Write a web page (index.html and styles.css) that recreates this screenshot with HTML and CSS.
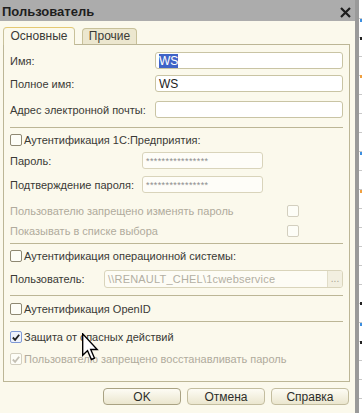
FILE: index.html
```html
<!DOCTYPE html>
<html lang="ru">
<head>
    <meta charset="UTF-8">
    <meta name="viewport" content="width=device-width, initial-scale=1.0">
    <title>Пользователь</title>
    <link rel="stylesheet" href="styles.css">
</head>
<body>
<div class="screen">
    <div class="window">
        <div class="titlebar">
            <span class="title">Пользователь</span>
            <svg class="close" width="11" height="11" viewBox="0 0 11 11">
                <path d="M1 1 L10 10 M10 1 L1 10" stroke="#1e1e1e" stroke-width="2.2"/>
            </svg>
        </div>

        <div class="body">
            <div class="tabs">
                <div class="tab active">Основные</div>
                <div class="tab">Прочие</div>
            </div>

            <div class="panel">
                <div class="field">
                    <label class="label w-main">Имя:</label>
                    <div class="input"><span class="selected">WS</span></div>
                </div>
                <div class="field mt-6">
                    <label class="label w-main">Полное имя:</label>
                    <div class="input">WS</div>
                </div>
                <div class="field mt-9">
                    <label class="label w-main">Адрес электронной почты:</label>
                    <div class="input"></div>
                </div>

                <div class="sep mt-9"></div>

                <div class="check mt-6">
                    <span class="box"></span>
                    <span>Аутентификация 1С:Предприятия:</span>
                </div>
                <div class="field mt-6">
                    <label class="label w-pass">Пароль:</label>
                    <div class="input pass">****************</div>
                </div>
                <div class="field mt-7">
                    <label class="label w-pass">Подтверждение пароля:</label>
                    <div class="input pass">****************</div>
                </div>
                <div class="check disabled mt-12">
                    <span class="grow">Пользователю запрещено изменять пароль</span>
                    <span class="box right"></span>
                </div>
                <div class="check disabled mt-8">
                    <span class="grow">Показывать в списке выбора</span>
                    <span class="box right"></span>
                </div>

                <div class="sep mt-6"></div>

                <div class="check mt-6">
                    <span class="box"></span>
                    <span>Аутентификация операционной системы:</span>
                </div>
                <div class="field user mt-8">
                    <label class="label w-user">Пользователь:</label>
                    <div class="input dim">
                        <span class="grow">\\RENAULT_CHEL\1cwebservice</span>
                        <span class="dots">...</span>
                    </div>
                </div>

                <div class="sep mt-7"></div>

                <div class="check mt-7">
                    <span class="box"></span>
                    <span>Аутентификация OpenID</span>
                </div>

                <div class="sep mt-6"></div>

                <div class="check mt-9">
                    <span class="box checked">
                        <svg width="11" height="11" viewBox="0 0 11 11"><path d="M2 5.5 L4.5 8 L9 2.5" fill="none" stroke="#222" stroke-width="2"/></svg>
                    </span>
                    <span>Защита от опасных действий</span>
                </div>
                <div class="check disabled mt-10">
                    <span class="box">
                        <svg width="11" height="11" viewBox="0 0 11 11"><path d="M2 5.5 L4.5 8 L9 2.5" fill="none" stroke="#c4c0b4" stroke-width="2"/></svg>
                    </span>
                    <span>Пользователю запрещено восстанавливать пароль</span>
                </div>
            </div>

            <div class="buttons">
                <button class="button default">OK</button>
                <button class="button">Отмена</button>
                <button class="button">Справка</button>
            </div>
        </div>

        <svg class="cursor" width="18" height="28" viewBox="0 0 13 20">
            <path d="M0.5 0.5 L0.5 16 L4 12.6 L6.8 19 L9 18 L6.3 11.8 L11 11.8 Z" fill="#fff" stroke="#000" stroke-width="1"/>
        </svg>
    </div>

    <div class="edge">
        <span class="mark blue" style="top: 19px"></span>
        <span class="mark black" style="top: 37px"></span>
        <span class="mark orange" style="top: 75px"></span>
        <span class="mark blue" style="top: 152px"></span>
        <span class="mark orange" style="top: 190px"></span>
        <span class="mark black" style="top: 302px"></span>
        <span class="mark blue" style="top: 323px"></span>
        <span class="mark black" style="top: 341px"></span>
    </div>
</div>
</body>
</html>
```

FILE: styles.css
```css
* {
    margin: 0;
    padding: 0;
    box-sizing: border-box;
}
body {
    font-family: "Liberation Sans", Arial, sans-serif;
    font-size: 11px;
    color: #3a3a36;
    background-color: #ffffff;
}

.screen {
    display: flex;
    height: 413px;
    overflow: hidden;
}

.window {
    position: relative;
    flex: none;
    width: 355px;
    background-color: #fbf9ec;
}

.titlebar {
    height: 21px;
    background-color: #acacac;
    display: flex;
    align-items: center;
    justify-content: space-between;
    padding: 1px 4px 0 2px;
}
.title {
    font-size: 13px;
    font-weight: bold;
    color: #1e1e1e;
}
.close {
    margin-top: 2px;
}

.body {
    padding: 6px 5px 0 3px;
}

.tabs {
    display: flex;
    align-items: flex-end;
    gap: 7px;
    height: 17px;
}
.tab {
    height: 16px;
    border: 1px solid #c8c19a;
    border-bottom: none;
    border-radius: 4px 4px 0 0;
    background-color: #ece7cf;
    font-size: 12px;
    color: #3a3a36;
    text-align: center;
    line-height: 15px;
    width: 55px;
}
.tab.active {
    position: relative;
    z-index: 1;
    width: 72px;
    height: 18px;
    margin-bottom: -1px;
    background-color: #fbf9ec;
    border-top-color: #e4c872;
    line-height: 17px;
}

.panel {
    height: 338px;
    border: 1px solid #bcb696;
    padding: 7px 6px 0 6px;
}

.field {
    display: flex;
    align-items: center;
    height: 17px;
}
.field.user {
    height: 18px;
}
.label {
    flex: none;
}
.w-main { width: 145px; }
.w-pass { width: 132px; }
.w-user { width: 94px; }

.input {
    flex: 1;
    height: 100%;
    display: flex;
    align-items: center;
    padding-left: 3px;
    background-color: #ffffff;
    border: 1px solid #c9c4a4;
    border-radius: 3px;
    font-size: 12px;
    color: #222;
}
.selected {
    background-color: #3f63c7;
    color: #ffffff;
}
.input.pass {
    flex: none;
    width: 121px;
    font-size: 9px;
    letter-spacing: 0.4px;
    color: #8e8e8e;
    background-color: #fefdf8;
    border-color: #d9d4bb;
}
.input.dim {
    background-color: #fdfcf5;
    border-color: #d9d4bb;
    color: #b3afa3;
    font-size: 11px;
    letter-spacing: 0.2px;
    padding-left: 3px;
    overflow: hidden;
}
.dots {
    width: 15px;
    height: 100%;
    border-left: 1px solid #e1ddc8;
    background-color: #f2efe0;
    color: #a9a594;
    text-align: center;
    font-size: 10px;
    letter-spacing: 0;
    line-height: 15px;
}
.grow {
    flex: 1;
}

.sep {
    height: 1px;
    background-color: #bcb696;
}

.check {
    display: flex;
    align-items: center;
    gap: 2px;
    height: 12px;
}
.check.disabled {
    color: #b0ab9c;
}
.box {
    flex: none;
    width: 12px;
    height: 12px;
    border: 1px solid #8e8872;
    border-radius: 2px;
    background-color: #fdfdf7;
    display: flex;
    align-items: center;
    justify-content: center;
}
.box svg {
    display: block;
}
.disabled .box {
    border-color: #d3cfbf;
}
.box.right {
    margin-right: 44px;
}
.box.checked {
    border-color: #7f99d6;
    background-color: #eef2fb;
}

.mt-6 { margin-top: 6px; }
.mt-7 { margin-top: 7px; }
.mt-8 { margin-top: 8px; }
.mt-9 { margin-top: 9px; }
.mt-10 { margin-top: 10px; }
.mt-12 { margin-top: 12px; }

.buttons {
    display: flex;
    justify-content: flex-end;
    gap: 6px;
    margin: 6px 1px 0 0;
}
.button {
    width: 78px;
    height: 17px;
    font-family: "Liberation Sans", Arial, sans-serif;
    font-size: 12px;
    color: #2e2e2a;
    background: linear-gradient(#fdfcf4, #ebe6cf);
    border: 1px solid #c3bd9f;
    border-radius: 4px;
    cursor: pointer;
}
.button.default {
    border-color: #a9a283;
}

.cursor {
    position: absolute;
    left: 82px;
    top: 333px;
}

.edge {
    position: relative;
    flex: 1;
    border-left: 4px solid #9a9a9a;
    background: repeating-linear-gradient(#ffffff 0, #ffffff 18px, #c8c8c8 18px, #c8c8c8 19px);
}
.mark {
    position: absolute;
    left: 1px;
    width: 2px;
    height: 3px;
}
.mark.blue { background-color: #3d8fe0; }
.mark.black { background-color: #222222; }
.mark.orange { background-color: #f0a040; }
```
